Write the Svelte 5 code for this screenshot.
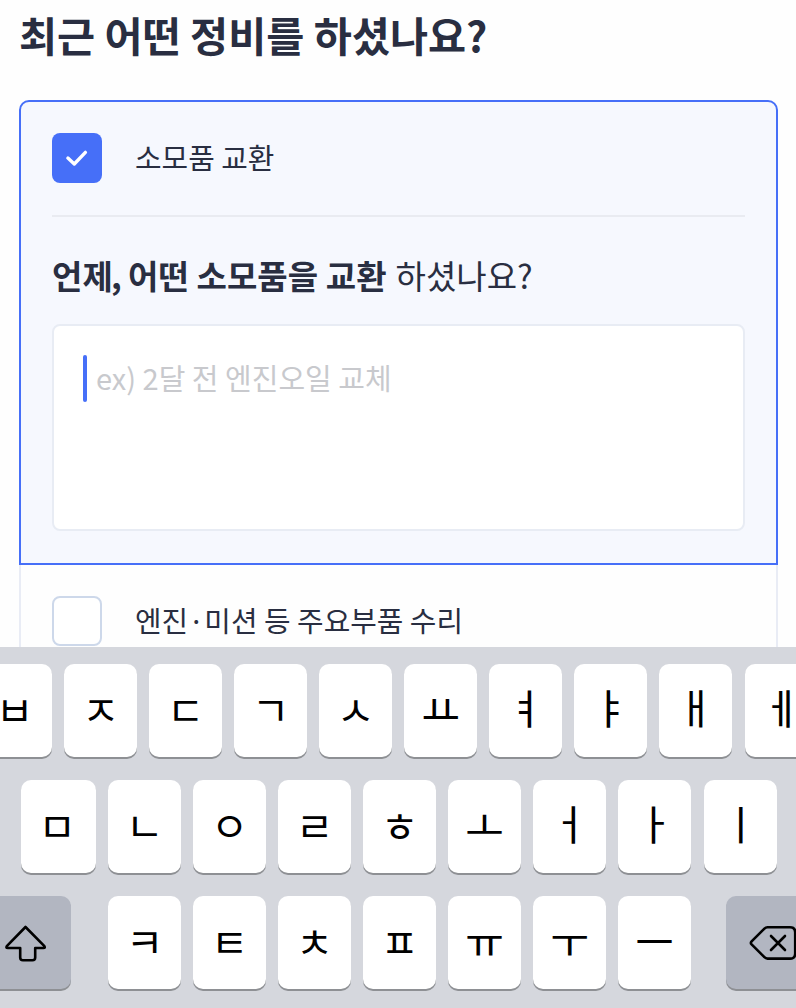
<script lang="ts">
  type Option = { id: string; label: string };

  const OPTIONS: Option[] = [
    { id: "parts", label: "소모품 교환" },
    { id: "engine", label: "엔진·미션 등 주요부품 수리" },
  ];

  const TOP_ROW = ["ㅂ", "ㅈ", "ㄷ", "ㄱ", "ㅅ", "ㅛ", "ㅕ", "ㅑ", "ㅐ", "ㅔ"];
  const HOME_ROW = ["ㅁ", "ㄴ", "ㅇ", "ㄹ", "ㅎ", "ㅗ", "ㅓ", "ㅏ", "ㅣ"];
  const BOTTOM_ROW = ["ㅋ", "ㅌ", "ㅊ", "ㅍ", "ㅠ", "ㅜ", "ㅡ"];
  const TALL = "ㅕㅑㅐㅔㅓㅏㅣ";
  const WIDE = "ㅛㅗㅠㅜㅡ";

  let selected = $state("parts");
</script>

{#snippet letter(key: string)}
  <button class="key" class:tall={TALL.includes(key)} class:wide={WIDE.includes(key)}>
    <span class="glyph">{key}</span>
  </button>
{/snippet}

<main class="screen">
  <section class="form">
    <h1>최근 어떤 정비를 하셨나요?</h1>

    <div class="options">
      {#each OPTIONS as option (option.id)}
        <div class="option" class:active={selected === option.id}>
          <button class="choice" onclick={() => (selected = option.id)}>
            <span class="checkbox">
              {#if selected === option.id}
                <svg width="50" height="50" viewBox="0 0 50 50">
                  <path d="M15.9 25.1 L22.3 31 L33.4 19.4" />
                </svg>
              {/if}
            </span>
            <span class="label">{option.label}</span>
          </button>
          {#if selected === option.id}
            <div class="detail">
              <p class="question"><strong>언제<span class="comma">,</span> 어떤 소모품을 교환</strong> 하셨나요?</p>
              <div class="field">
                <span class="caret"></span>
                <span class="placeholder">ex) 2달 전 엔진오일 교체</span>
              </div>
            </div>
          {/if}
        </div>
      {/each}
    </div>
  </section>

  <section class="keyboard">
    <div class="row row-top">
      {#each TOP_ROW as key}
        {@render letter(key)}
      {/each}
    </div>
    <div class="row row-home">
      {#each HOME_ROW as key}
        {@render letter(key)}
      {/each}
    </div>
    <div class="row row-bottom">
      <button class="key key-fn key-shift" aria-label="Shift">
        <svg width="44" height="40" viewBox="0 0 44 40">
          <path d="M21.5 4 L40.4 23.2 Q41.6 25 39.4 25 H31.2 V34.4 Q31.2 37.2 28.4 37.2 H19 Q16.2 37.2 16.2 34.4 V25 H3.8 Q1.6 25 2.8 23.2 Z" />
        </svg>
      </button>
      {#each BOTTOM_ROW as key}
        {@render letter(key)}
      {/each}
      <button class="key key-fn key-delete" aria-label="Delete">
        <svg width="50" height="38" viewBox="0 0 50 38">
          <path d="M18.5 3.2 H41 Q46.2 3.2 46.2 8.4 V29.4 Q46.2 34.6 41 34.6 H18.5 Q16.8 34.6 15.4 33.2 L2.6 20.4 Q1.2 18.9 2.6 17.4 L15.4 4.6 Q16.8 3.2 18.5 3.2 Z" />
          <path d="M22 12 L36 26 M36 12 L22 26" />
        </svg>
      </button>
    </div>
  </section>
</main>

<style>
  :global(body) { background: #fefefe; }
  .screen {
    display: flex; flex-direction: column; width: 796px; height: 1008px;
    overflow: hidden; background: #fefefe; color: #292e41;
    font-family: "Noto Sans CJK KR", "Noto Sans", sans-serif;
  }
  .form { height: 647px; flex-shrink: 0; overflow: hidden; padding: 4px 18.5px 0 19px; box-sizing: border-box; }
  h1 { margin: 0 0 36px; font-size: 41.4px; line-height: 60px; font-weight: 700; white-space: nowrap; }
  button { font-family: inherit; color: inherit; border: none; cursor: pointer; }

  .option { border: 2px solid #e9ecf5; border-top: none; padding: 0 31px; }
  .option.active {
    border: 2px solid #466ff8; border-radius: 10px 10px 0 0;
    background: #f6f8fe; height: 460.5px;
  }
  .choice {
    display: flex; align-items: center; gap: 33px; width: 100%;
    height: 112px; padding: 0; background: none;
  }
  .checkbox {
    width: 50px; height: 50px; box-sizing: border-box; flex-shrink: 0;
    border: 2px solid #cdd8ea; border-radius: 8px; background: #fff;
  }
  .active .checkbox { border: none; background: #466ff8; }
  .checkbox svg { display: block; }
  .checkbox path { fill: none; stroke: #fff; stroke-width: 3.4; stroke-linecap: round; stroke-linejoin: round; }
  .label { font-size: 28.9px; line-height: 42px; padding-bottom: 4px; white-space: nowrap; }

  .detail { margin-top: 1px; border-top: 2px solid #e9ebf1; }
  .question { margin: 0; padding: 35px 0 25px; font-size: 33px; line-height: 47px; white-space: nowrap; }
  .question strong { margin-right: 1.5px; letter-spacing: 0.08px; }
  .comma { margin-left: -2px; letter-spacing: -1.2px; }
  .field {
    display: flex; gap: 9px; height: 207px; box-sizing: border-box;
    padding: 29px; border: 2px solid #e8ecf4; border-radius: 8px; background: #fff;
  }
  .caret { width: 4px; height: 47px; border-radius: 2px; background: #466ff8; }
  .placeholder { font-size: 29px; line-height: 45px; color: #c8c9cd; white-space: nowrap; }

  .keyboard {
    flex: 1; display: flex; flex-direction: column; gap: 22px;
    padding-top: 17px; background: #d5d7dd;
  }
  .row { display: flex; gap: 12px; height: 94px; }
  .row-top { margin-left: -21px; }
  .row-home { padding-left: 21px; }
  .key {
    display: flex; align-items: center; justify-content: center; flex: none;
    width: 73px; height: 93px; padding: 0; border-radius: 10px;
    background: #fff; color: #000; font-size: 41px; line-height: 50px;
    box-shadow: 0 2px 0 #8e9094;
  }
  .row-top .key:first-child { box-sizing: border-box; padding-right: 2px; }
  .row-top .key:last-child, .row-home .key:last-child { margin-left: 1px; }
  .row-home .key:first-child { width: 75px; box-sizing: border-box; padding-right: 3px; }
  .glyph { padding-bottom: 6px; }
  .tall { font-size: 41px; }
  .tall .glyph { padding-bottom: 9px; }
  .wide { font-size: 42px; }
  .key-fn { background: #b2b6c1; }
  .key-shift { width: 91px; margin: 0 25px 0 -20px; }
  .key-delete { width: 91px; margin-left: 23px; padding-left: 4px; }
  .key svg { fill: none; stroke: #000; stroke-width: 2.6; stroke-linejoin: round; stroke-linecap: round; }
</style>
